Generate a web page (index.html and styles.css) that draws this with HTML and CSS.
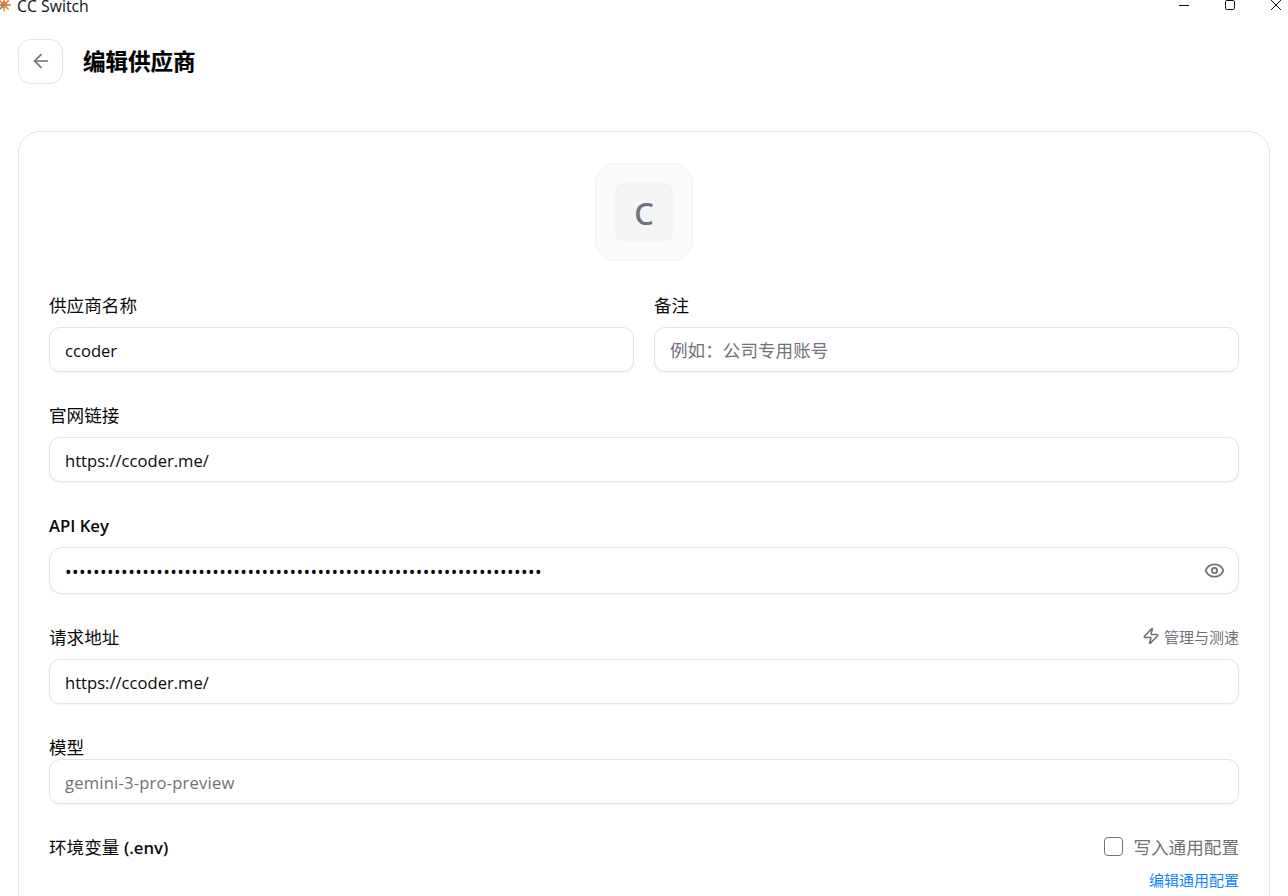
FILE: index.html
```html
<!DOCTYPE html>
<html lang="zh-CN">
<head>
<meta charset="utf-8">
<title>CC Switch</title>
<link rel="stylesheet" href="styles.css">
</head>
<body>
<div class="app">
  <div class="titlebar">
    <div class="brand">
      <svg class="logo" width="14" height="14" viewBox="0 0 14 14" fill="none" stroke-width="1.7" stroke-linecap="round">
        <circle cx="7" cy="7" r="3.4" fill="#e8925a" stroke="none"/>
        <path stroke="#e8803a" d="M7 7V1M7 7l4.2-4.2M7 7l-4.2-4.2"/>
        <path stroke="#d9682c" d="M7 7h6M7 7H1"/>
        <path stroke="#e8a040" d="M7 7l4.2 4.2M7 7v6"/>
        <path stroke="#5a9aa0" d="M7 7l-4.2 4.2"/>
      </svg>
      <span class="app-name">CC Switch</span>
    </div>
    <div class="win-controls">
      <svg class="win-btn" width="10" height="10" viewBox="0 0 10 10"><path d="M0 5.5h10" stroke="#111" stroke-width="1"/></svg>
      <svg class="win-btn" width="10" height="10" viewBox="0 0 10 10"><rect x=".5" y=".5" width="9" height="9" rx="1.2" fill="none" stroke="#111"/></svg>
      <svg class="win-btn" width="10" height="10" viewBox="0 0 10 10"><path d="M0 0l10 10M10 0L0 10" stroke="#111" stroke-width="1"/></svg>
    </div>
  </div>

  <header class="page-header">
    <button class="back-btn" type="button" aria-label="返回">
      <svg width="22" height="22" viewBox="0 0 24 24" fill="none" stroke="#71717a" stroke-width="1.9" stroke-linecap="round" stroke-linejoin="round"><path d="m12 19-7-7 7-7"/><path d="M19 12H5"/></svg>
    </button>
    <h1 class="page-title">编辑供应商</h1>
  </header>

  <main class="card">
    <div class="icon-wrap">
      <div class="icon-tile"><div class="icon-inner">C</div></div>
    </div>

    <div class="two-col">
      <div class="field">
        <label class="label">供应商名称</label>
        <input class="input input-latin" type="text" value="ccoder">
      </div>
      <div class="field">
        <label class="label">备注</label>
        <input class="input" type="text" placeholder="例如：公司专用账号">
      </div>
    </div>

    <div class="field">
      <label class="label">官网链接</label>
      <input class="input input-latin" type="text" value="https://ccoder.me/">
    </div>

    <div class="field">
      <label class="label label-latin"><span class="latin-medium">API Key</span></label>
      <div class="input-wrap">
        <input class="input input-key" type="password" value="xxxxxxxxxxxxxxxxxxxxxxxxxxxxxxxxxxxxxxxxxxxxxxxxxxxxxxxxxxxxxxxxxxxx">
        <svg class="eye" width="21" height="21" viewBox="0 0 24 24" fill="none" stroke="#71717a" stroke-width="2" stroke-linecap="round" stroke-linejoin="round"><path d="M2.062 12.348a1 1 0 0 1 0-.696 10.75 10.75 0 0 1 19.876 0 1 1 0 0 1 0 .696 10.75 10.75 0 0 1-19.876 0"/><circle cx="12" cy="12" r="3"/></svg>
      </div>
    </div>

    <div class="field">
      <div class="label label-split">
        <label>请求地址</label>
        <span class="manage">
          <svg width="18" height="18" viewBox="0 0 24 24" fill="none" stroke="#71717a" stroke-width="2" stroke-linecap="round" stroke-linejoin="round"><path d="M4 14a1 1 0 0 1-.78-1.63l9.9-10.2a.5.5 0 0 1 .86.46l-1.92 6.02A1 1 0 0 0 13 10h7a1 1 0 0 1 .78 1.63l-9.9 10.2a.5.5 0 0 1-.86-.46l1.92-6.02A1 1 0 0 0 11 14z"/></svg>
          管理与测速
        </span>
      </div>
      <input class="input input-latin" type="text" value="https://ccoder.me/">
    </div>

    <div class="field">
      <label class="label label-tight">模型</label>
      <input class="input input-latin" type="text" placeholder="gemini-3-pro-preview">
    </div>

    <div class="field field-env">
      <div class="env-row">
        <label class="env-label">环境变量 <span class="latin-medium">(.env)</span></label>
        <label class="check">
          <span class="check-box"></span>
          写入通用配置
        </label>
      </div>
      <a class="edit-link" href="#">编辑通用配置</a>
    </div>
  </main>
</div>
</body>
</html>
```

FILE: styles.css
```css
* { box-sizing: border-box; }

html, body {
  margin: 0;
  height: 896px;
  overflow: hidden;
  background: #fff;
}

body {
  font-family: "Open Sans", "Noto Sans CJK SC", sans-serif;
  color: #0a0a0a;
  font-size: 17.6px;
}

.app {
  display: flex;
  flex-direction: column;
  height: 896px;
  overflow: hidden;
}

.titlebar {
  display: flex;
  justify-content: space-between;
  height: 13px;
  flex: none;
}

.brand {
  display: flex;
  align-items: center;
  gap: 6px;
  height: 13px;
  margin-left: -3px;
}

.logo { flex: none; margin-top: -4px; }

.app-name {
  font-size: 15.8px;
  line-height: 13px;
  color: #111;
}

.win-controls {
  display: flex;
  gap: 36px;
  padding-right: 7px;
  height: 10px;
}

.win-btn { display: block; flex: none; }

.page-header {
  display: flex;
  align-items: center;
  gap: 20px;
  padding: 26px 18px 0;
  flex: none;
}

.back-btn {
  width: 45px;
  height: 45px;
  padding: 0 0 1px;
  display: flex;
  align-items: center;
  justify-content: center;
  background: #fff;
  border: 1px solid #e4e4e7;
  border-radius: 13px;
}

.page-title {
  margin: 0;
  font-size: 22.5px;
  font-weight: 700;
  line-height: 45px;
  color: #000;
  -webkit-text-stroke: .2px #000;
}

.card {
  margin: 47px 18px 0;
  padding: 31px 30px 30px;
  border: 1px solid #e4e4e7;
  border-radius: 22px;
  background: #fff;
  flex: none;
}

.icon-wrap {
  display: flex;
  justify-content: center;
  margin-bottom: 1px;
}

.icon-tile {
  width: 98px;
  height: 98px;
  display: flex;
  align-items: center;
  justify-content: center;
  background: #fafafa;
  border: 1px solid #f0f0f1;
  border-radius: 20px;
}

.icon-inner {
  width: 60px;
  height: 60px;
  display: flex;
  align-items: center;
  justify-content: center;
  padding-top: 2px;
  background: #f4f4f5;
  border-radius: 13px;
  color: #70727e;
  font-family: "Noto Sans", sans-serif;
  font-size: 31px;
  font-weight: 500;
}

.two-col {
  display: grid;
  grid-template-columns: 1fr 1fr;
  gap: 20px;
}

.field { margin-top: 24px; }

.label {
  display: flex;
  align-items: center;
  height: 41px;
  font-weight: 400;
  font-size: 17.6px;
  padding-bottom: 5px;
}

.label-split { justify-content: space-between; }

.label-latin { padding-bottom: 3px; }

.label-tight {
  height: 31px;
  padding-bottom: 0;
  align-items: flex-end;
  line-height: 24px;
}

.latin-medium {
  font-size: 16.7px;
  font-weight: 600;
}

.manage {
  display: inline-flex;
  align-items: center;
  gap: 4px;
  font-size: 15px;
  font-weight: 400;
  color: #71717a;
}

.input {
  display: block;
  width: 100%;
  height: 45px;
  padding: 1px 15px 0;
  font: inherit;
  font-size: 17.6px;
  color: #0a0a0a;
  background: #fff;
  border: 1px solid #e4e4e7;
  border-radius: 11px;
  box-shadow: 0 1px 2px rgba(0, 0, 0, .05);
  outline: none;
}

.input-latin { font-size: 16.6px; }

.input::placeholder { color: #71717a; opacity: 1; }

.input-latin::placeholder { letter-spacing: .2px; }

.input-wrap { position: relative; }

.input-key {
  height: 47px;
  border-radius: 13px;
  padding: 2px 48px 0 15px;
  letter-spacing: .4px;
}

.eye {
  position: absolute;
  right: 14px;
  top: 13px;
}

.field-env { padding-top: 8px; }

.env-row {
  display: flex;
  align-items: center;
  justify-content: space-between;
  height: 20px;
}

.check {
  display: inline-flex;
  align-items: center;
  gap: 10px;
  color: #71717a;
}

.check-box {
  width: 19px;
  height: 19px;
  border: 1.6px solid #71717a;
  border-radius: 4px;
  background: #fff;
}

.edit-link {
  display: block;
  margin-top: 14px;
  text-align: right;
  font-size: 15px;
  line-height: 20px;
  color: #0a84ff;
  text-decoration: none;
}
```
